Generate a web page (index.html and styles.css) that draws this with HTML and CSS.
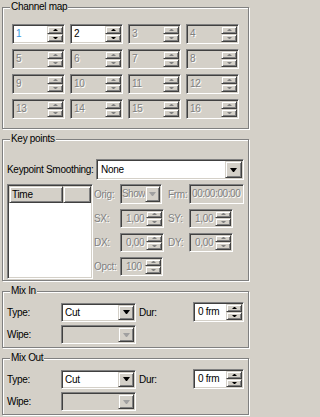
FILE: index.html
```html
<!DOCTYPE html>
<html>
<head>
<meta charset="utf-8">
<link rel="stylesheet" href="styles.css">
</head>
<body>
<div class="panel">
  <section class="group g-channel">
    <span class="legend">Channel map</span>
    <div class="chgrid">
      <div class="spin"><span class="val sel">1</span><span class="btns"><i class="b up"></i><i class="b dn"></i></span></div>
      <div class="spin"><span class="val">2</span><span class="btns"><i class="b up"></i><i class="b dn"></i></span></div>
      <div class="spin off"><span class="val">3</span><span class="btns"><i class="b up"></i><i class="b dn"></i></span></div>
      <div class="spin off"><span class="val">4</span><span class="btns"><i class="b up"></i><i class="b dn"></i></span></div>
      <div class="spin off"><span class="val">5</span><span class="btns"><i class="b up"></i><i class="b dn"></i></span></div>
      <div class="spin off"><span class="val">6</span><span class="btns"><i class="b up"></i><i class="b dn"></i></span></div>
      <div class="spin off"><span class="val">7</span><span class="btns"><i class="b up"></i><i class="b dn"></i></span></div>
      <div class="spin off"><span class="val">8</span><span class="btns"><i class="b up"></i><i class="b dn"></i></span></div>
      <div class="spin off"><span class="val">9</span><span class="btns"><i class="b up"></i><i class="b dn"></i></span></div>
      <div class="spin off"><span class="val">10</span><span class="btns"><i class="b up"></i><i class="b dn"></i></span></div>
      <div class="spin off"><span class="val">11</span><span class="btns"><i class="b up"></i><i class="b dn"></i></span></div>
      <div class="spin off"><span class="val">12</span><span class="btns"><i class="b up"></i><i class="b dn"></i></span></div>
      <div class="spin off"><span class="val">13</span><span class="btns"><i class="b up"></i><i class="b dn"></i></span></div>
      <div class="spin off"><span class="val">14</span><span class="btns"><i class="b up"></i><i class="b dn"></i></span></div>
      <div class="spin off"><span class="val">15</span><span class="btns"><i class="b up"></i><i class="b dn"></i></span></div>
      <div class="spin off"><span class="val">16</span><span class="btns"><i class="b up"></i><i class="b dn"></i></span></div>
    </div>
  </section>

  <section class="group g-key">
    <span class="legend">Key points</span>
    <div class="smooth-row">
      <span class="smooth-label">Keypoint Smoothing:</span>
      <div class="combo big"><span class="txt">None</span><b class="drop"></b></div>
    </div>
    <div class="kp-body">
      <div class="list">
        <div class="lh"><span class="hc time">Time</span><span class="hc rest"></span></div>
      </div>
      <div class="kp-grid">
        <span class="lab dis">Orig:</span>
        <div class="combo off show"><span class="txt">Show</span><b class="drop"></b></div>
        <span class="lab lab2 dis">Frm:</span>
        <div class="field off"><span class="txt">00:00:00:00</span></div>

        <span class="lab dis">SX:</span>
        <div class="spin off kp w44"><span class="val">1,00</span><span class="btns"><i class="b up"></i><i class="b dn"></i></span></div>
        <span class="lab lab2 dis">SY:</span>
        <div class="spin off kp w44"><span class="val">1,00</span><span class="btns"><i class="b up"></i><i class="b dn"></i></span></div>

        <span class="lab dis">DX:</span>
        <div class="spin off kp w44"><span class="val">0,00</span><span class="btns"><i class="b up"></i><i class="b dn"></i></span></div>
        <span class="lab lab2 dis">DY:</span>
        <div class="spin off kp w44"><span class="val">0,00</span><span class="btns"><i class="b up"></i><i class="b dn"></i></span></div>

        <span class="lab dis">Opct:</span>
        <div class="spin off kp w43"><span class="val">100</span><span class="btns"><i class="b up"></i><i class="b dn"></i></span></div>
      </div>
    </div>
  </section>

  <section class="group g-mix">
    <span class="legend">Mix In</span>
    <div class="mix-grid">
      <span class="lab">Type:</span>
      <div class="combo mixc"><span class="txt">Cut</span><b class="drop"></b></div>
      <span class="lab dur">Dur:</span>
      <div class="spin durspin"><span class="val">0 frm</span><span class="btns"><i class="b up"></i><i class="b dn"></i></span></div>
      <span class="lab">Wipe:</span>
      <div class="combo mixc off"><span class="txt"></span><b class="drop"></b></div>
    </div>
  </section>

  <section class="group g-mix">
    <span class="legend">Mix Out</span>
    <div class="mix-grid">
      <span class="lab">Type:</span>
      <div class="combo mixc"><span class="txt">Cut</span><b class="drop"></b></div>
      <span class="lab dur">Dur:</span>
      <div class="spin durspin"><span class="val">0 frm</span><span class="btns"><i class="b up"></i><i class="b dn"></i></span></div>
      <span class="lab">Wipe:</span>
      <div class="combo mixc off"><span class="txt"></span><b class="drop"></b></div>
    </div>
  </section>
</div>
</body>
</html>
```

FILE: styles.css
```css
* { box-sizing: border-box; }

html, body {
  margin: 0;
  background: #d4d0c8;
}

body {
  width: 252px;
  height: 417px;
  overflow: hidden;
  font-family: "Liberation Sans", Arial, sans-serif;
  font-size: 10px;
  letter-spacing: -0.3px;
  color: #000;
}

.panel {
  padding: 7px 3px 0 2px;
  display: flex;
  flex-direction: column;
  gap: 10px;
}

/* etched group box */
.group {
  position: relative;
  border: 1px solid #808080;
  box-shadow: inset 1px 1px 0 #fff, 1px 1px 0 #fff;
}

.legend {
  position: absolute;
  top: -7px;
  left: 7px;
  padding: 0 1px;
  background: #d4d0c8;
  line-height: 12px;
  white-space: nowrap;
}

/* sunken field */
.spin, .combo, .field, .list {
  border: 1px solid;
  border-color: #808080 #fff #fff #808080;
  box-shadow: inset 1px 1px 0 #404040, inset -1px -1px 0 #d4d0c8;
  padding: 1px;
  background: #fff;
}

.off { background: #d4d0c8; }

.dis, .off .val, .off .txt {
  color: #808080;
  text-shadow: 1px 1px 0 #fff;
}

/* spin box */
.spin {
  height: 20px;
  display: flex;
}

.val {
  flex: 1;
  padding-left: 2px;
  line-height: 16px;
  white-space: nowrap;
  overflow: hidden;
}

.sel { color: #3c96e0; }

.btns {
  width: 16px;
  display: flex;
  flex-direction: column;
}

.b, .drop, .hc {
  border: 1px solid;
  border-color: #d4d0c8 #404040 #404040 #d4d0c8;
  box-shadow: inset 1px 1px 0 #fff, inset -1px -1px 0 #808080;
  background: #d4d0c8;
}

.b {
  flex: 1;
  display: flex;
  align-items: center;
  justify-content: center;
}

.b::after {
  content: "";
  width: 1px;
  height: 0;
  border-left: 2px solid transparent;
  border-right: 2px solid transparent;
}

.up::after { border-bottom: 2px solid #000; }
.dn::after { border-top: 2px solid #000; }
.off .up::after { border-bottom-color: #808080; }
.off .dn::after { border-top-color: #808080; }

/* channel map */
.g-channel {
  padding: 16px 0 9px 9px;
}

.chgrid {
  display: grid;
  grid-template-columns: repeat(4, 53px);
  gap: 5px;
}

/* combo box */
.combo {
  height: 19px;
  display: flex;
}

.combo .txt, .field .txt {
  flex: 1;
  padding-left: 2px;
  line-height: 15px;
  white-space: nowrap;
  overflow: hidden;
}

.drop {
  width: 16px;
  display: flex;
  align-items: center;
  justify-content: center;
}

.drop::after {
  content: "";
  width: 1px;
  height: 0;
  border-left: 3px solid transparent;
  border-right: 3px solid transparent;
  border-top: 4px solid #000;
}

.off .drop::after { border-top-color: #a0a0a0; }

/* key points */
.g-key {
  padding: 19px 4px 1px 4px;
}

.smooth-row {
  display: flex;
  align-items: center;
  height: 21px;
}

.smooth-label {
  width: 89px;
  white-space: nowrap;
}

.combo.big {
  width: 148px;
  height: 21px;
}

.combo.big .txt {
  line-height: 17px;
  padding-left: 3px;
}

.combo.big .drop { width: 17px; }

.kp-body {
  display: flex;
  margin-top: 4px;
}

.list {
  width: 87px;
  height: 95px;
  margin-right: 1px;
}

.lh {
  display: flex;
  height: 17px;
}

.hc {
  line-height: 15px;
  padding-left: 2px;
}

.hc.time { width: 54px; }
.hc.rest { flex: 1; }

.kp-grid {
  display: grid;
  grid-template-columns: 26px 44px 25px 55px;
  grid-auto-rows: 20px;
  row-gap: 4px;
  align-items: center;
  align-content: start;
}

.lab {
  white-space: nowrap;
}

.lab2 { padding-left: 4px; }

.combo.show {
  width: 42px;
  height: 20px;
}

.combo.show .txt {
  line-height: 16px;
  padding-left: 0;
  letter-spacing: -0.55px;
}
.combo.show .drop { width: 15px; }

.field {
  height: 20px;
  display: flex;
}

.field .txt { line-height: 16px; padding-left: 1px; letter-spacing: -0.4px; }

.spin.kp { height: 19px; }
.spin.kp .val { line-height: 15px; padding-left: 4px; }
.w44 { width: 44px; }
.w43 { width: 43px; }

/* mix in / out */
.g-mix {
  padding: 10px 4px 3px 4px;
}

.mix-grid {
  display: grid;
  grid-template-columns: 54px 75px 57px 51px;
  grid-template-rows: 20px 19px;
  row-gap: 3px;
  align-items: center;
}

.mixc { width: 75px; }

.dur { padding-left: 3px; }

.durspin .val { padding-left: 3px; }
```
